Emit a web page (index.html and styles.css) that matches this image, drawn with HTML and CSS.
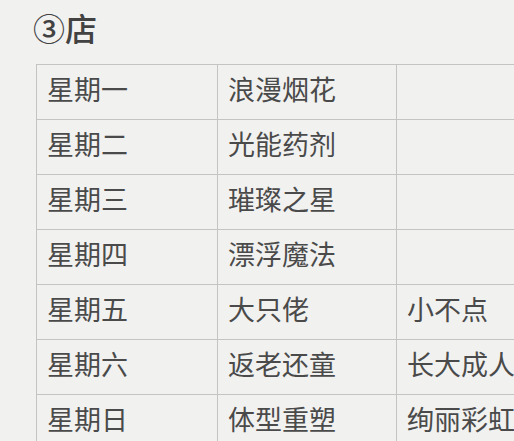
FILE: index.html
```html
<!DOCTYPE html>
<html lang="zh">
<head>
<meta charset="utf-8">
<link rel="stylesheet" href="styles.css">
</head>
<body>
<div class="page">
  <h1 class="title">③店</h1>
  <div class="clip">
    <table class="shop">
      <tr><td class="c1">星期一</td><td class="c2">浪漫烟花</td><td class="c3"></td></tr>
      <tr><td class="c1">星期二</td><td class="c2">光能药剂</td><td class="c3"></td></tr>
      <tr><td class="c1">星期三</td><td class="c2">璀璨之星</td><td class="c3"></td></tr>
      <tr><td class="c1">星期四</td><td class="c2">漂浮魔法</td><td class="c3"></td></tr>
      <tr><td class="c1">星期五</td><td class="c2">大只佬</td><td class="c3">小不点</td></tr>
      <tr><td class="c1">星期六</td><td class="c2">返老还童</td><td class="c3">长大成人</td></tr>
      <tr><td class="c1">星期日</td><td class="c2">体型重塑</td><td class="c3">绚丽彩虹</td></tr>
    </table>
  </div>
</div>
</body>
</html>
```

FILE: styles.css
```css
html, body {
  margin: 0;
  padding: 0;
  background: #f1f1f0;
  width: 514px;
  height: 441px;
  overflow: hidden;
}
.page {
  padding: 6px 0 0 36px;
  font-family: "Noto Sans CJK SC", "Noto Sans", sans-serif;
  color: #505050;
}
.title {
  margin: 0 0 16px -3px;
  font-size: 32px;
  line-height: 42px;
  font-weight: 500;
  color: #424242;
}
.clip {
  width: 478px;
  overflow: hidden;
}
.shop {
  border-collapse: collapse;
  table-layout: fixed;
  width: 540px;
}
.shop td {
  border: 1px solid #c4c4c4;
  height: 55px;
  padding: 0 0 7px 10px;
  box-sizing: border-box;
  font-size: 27px;
  line-height: 30px;
  color: #4a4a4a;
  white-space: nowrap;
  overflow: hidden;
}
.c1 { width: 181px; }
.c2 { width: 179px; }
.c3 { width: 180px; }
```
